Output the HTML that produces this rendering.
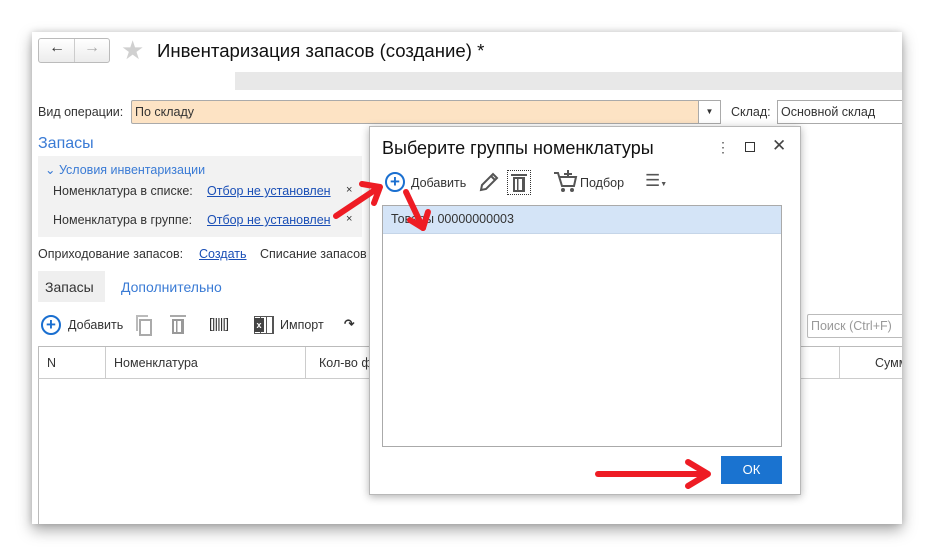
<!DOCTYPE html>
<html><head><meta charset="utf-8"><style>
*{box-sizing:border-box;margin:0;padding:0}
body{width:934px;height:557px;background:#fff;position:relative;overflow:hidden;font-family:"Liberation Sans",Arial,sans-serif;font-size:12.5px;color:#333}
.a{position:absolute;white-space:nowrap}
.win{position:absolute;left:32px;top:32px;width:870px;height:492px;background:#fff;box-shadow:0 6px 14px rgba(0,0,0,.35),0 0 6px rgba(0,0,0,.15);overflow:hidden}
.lnk{color:#1a4fb6;text-decoration:underline}
.blue{color:#3a7bd5}
.dlg{position:absolute;left:369px;top:126px;width:432px;height:369px;background:#fff;border:1px solid #b8b8b8;box-shadow:0 2px 8px rgba(0,0,0,.3)}
.tr{border:2px solid #999;background:repeating-linear-gradient(90deg,transparent 0 2px,#999 2px 3.5px,transparent 3.5px 5px)}
</style></head><body>
<div class="win">
 <div class="a" style="left:6px;top:6px;width:72px;height:25px;border:1px solid #bbb;border-radius:3px;background:linear-gradient(#fff,#ececec)"></div>
 <div class="a" style="left:42px;top:7px;width:1px;height:23px;background:#ccc"></div>
 <div class="a" style="left:17px;top:7px;font-size:16px;color:#333">&#8592;</div>
 <div class="a" style="left:52px;top:7px;font-size:16px;color:#aaa">&#8594;</div>
 <div class="a" style="left:89px;top:3px;font-size:26px;color:#d0d0d0">&#9733;</div>
 <div class="a" style="left:125px;top:8px;font-size:18.6px;color:#111">Инвентаризация запасов (создание) *</div>
 <div class="a" style="left:203px;top:40px;width:667px;height:18px;background:#e8e8e8"></div>
 <div class="a" style="left:6px;top:73px">Вид операции:</div>
 <div class="a" style="left:99px;top:68px;width:590px;height:24px;background:#fde3c4;border:1px solid #aaa;border-radius:2px;padding:4px 3px">По складу</div>
 <div class="a" style="left:666px;top:68px;width:23px;height:24px;background:#fff;border:1px solid #aaa;font-size:8px;text-align:center;line-height:22px">&#9660;</div>
 <div class="a" style="left:699px;top:73px">Склад:</div>
 <div class="a" style="left:745px;top:68px;width:140px;height:24px;border:1px solid #aaa;padding:4px 3px">Основной склад</div>
 <div class="a blue" style="left:6px;top:103px;font-size:16px">Запасы</div>
 <div class="a" style="left:6px;top:124px;width:324px;height:81px;background:#f2f2f2"></div>
 <div class="a blue" style="left:13px;top:130px">&#8964; Условия инвентаризации</div>
 <div class="a" style="left:21px;top:152px">Номенклатура в списке:</div>
 <div class="a lnk" style="left:175px;top:152px">Отбор не установлен</div>
 <div class="a" style="left:314px;top:152px;font-size:11px">×</div>
 <div class="a" style="left:21px;top:181px">Номенклатура в группе:</div>
 <div class="a lnk" style="left:175px;top:181px">Отбор не установлен</div>
 <div class="a" style="left:314px;top:181px;font-size:11px">×</div>
 <div class="a" style="left:6px;top:215px">Оприходование запасов:</div>
 <div class="a lnk" style="left:167px;top:215px">Создать</div>
 <div class="a" style="left:228px;top:215px">Списание запасов</div>
 <div class="a" style="left:6px;top:239px;width:67px;height:31px;background:#efefef"></div>
 <div class="a" style="left:13px;top:247px;font-size:14px">Запасы</div>
 <div class="a blue" style="left:89px;top:247px;font-size:14px">Дополнительно</div>
 <div class="a" style="left:9px;top:283px;width:20px;height:20px;border:2px solid #1a6fd0;border-radius:50%;color:#1a6fd0;font-weight:bold;text-align:center;line-height:15px;font-size:17px">+</div>
 <div class="a" style="left:36px;top:286px">Добавить</div>
 <div class="a" style="left:104px;top:283px;width:12px;height:16px;border:2px solid #bbb;border-right:none;border-bottom:none"></div>
 <div class="a" style="left:107px;top:287px;width:13px;height:17px;border:2px solid #aaa"></div>
 <div class="a" style="left:138px;top:283px;width:16px;height:2px;background:#aaa"></div>
 <div class="a tr" style="left:140px;top:287px;width:12px;height:15px"></div>
 <div class="a" style="left:177px;top:283px;font-size:14px;letter-spacing:-1px;color:#333">[|||||]</div>
 <div class="a" style="left:222px;top:284px;width:20px;height:18px;border:1px solid #555;background:repeating-linear-gradient(90deg,#fff 0 5px,#555 5px 6px)"></div>
 <div class="a" style="left:222px;top:286px;width:10px;height:14px;background:#444;color:#fff;font-size:9px;font-weight:bold;text-align:center;line-height:14px">x</div>
 <div class="a" style="left:248px;top:286px">Импорт</div>
 <div class="a" style="left:312px;top:284px;font-weight:bold">&#8631;</div>
 <div class="a" style="left:775px;top:282px;width:100px;height:24px;border:1px solid #bbb;border-radius:2px;padding:4px 3px;color:#999">Поиск (Ctrl+F)</div>
 <div class="a" style="left:6px;top:314px;width:870px;height:33px;border-top:1px solid #bbb;border-bottom:1px solid #ccc;border-left:1px solid #bbb"></div>
 <div class="a" style="left:73px;top:315px;width:1px;height:32px;background:#ccc"></div>
 <div class="a" style="left:273px;top:315px;width:1px;height:32px;background:#ccc"></div>
 <div class="a" style="left:807px;top:315px;width:1px;height:32px;background:#ccc"></div>
 <div class="a" style="left:15px;top:324px">N</div>
 <div class="a" style="left:82px;top:324px">Номенклатура</div>
 <div class="a" style="left:287px;top:324px">Кол-во ф</div>
 <div class="a" style="left:843px;top:324px">Сумма</div>
 <div class="a" style="left:6px;top:347px;width:1px;height:150px;background:#bbb"></div>
</div>
<div class="dlg">
 <div class="a" style="left:12px;top:11px;font-size:18px;color:#111">Выберите группы номенклатуры</div>
 <div class="a" style="left:346px;top:12px;font-size:14px;color:#555">&#8942;</div>
 <div class="a" style="left:375px;top:15px;width:10px;height:10px;border:1.5px solid #333"></div>
 <div class="a" style="left:402px;top:9px;font-size:17px;color:#444">&#10005;</div>
 <div class="a" style="left:15px;top:45px;width:20px;height:20px;border:2px solid #1a6fd0;border-radius:50%;color:#1a6fd0;font-weight:bold;text-align:center;line-height:15px;font-size:17px">+</div>
 <div class="a" style="left:41px;top:49px">Добавить</div>
 <svg class="a" style="left:108px;top:44px" width="22" height="22"><path d="M3 19 L4 14 L15 3 L19 7 L8 18 Z M13 5 L17 9" stroke="#555" stroke-width="2" fill="none"/></svg>
 <div class="a" style="left:137px;top:43px;width:24px;height:25px;border:1px dotted #333"></div>
 <div class="a" style="left:141px;top:47px;width:16px;height:2px;background:#555"></div>
 <div class="a tr" style="left:143px;top:50px;width:12px;height:15px;border-color:#555;background:repeating-linear-gradient(90deg,transparent 0 2px,#555 2px 3.5px,transparent 3.5px 5px)"></div>
 <svg class="a" style="left:183px;top:42px" width="26" height="26"><path d="M1 4 H5 L9 17 H21 L23 8 H7" stroke="#555" stroke-width="2" fill="none"/><path d="M15 1 V9 M11 5 H19" stroke="#555" stroke-width="2"/><circle cx="10" cy="21" r="2" fill="#555"/><circle cx="19" cy="21" r="2" fill="#555"/></svg>
 <div class="a" style="left:210px;top:49px">Подбор</div>
 <div class="a" style="left:275px;top:44px;font-size:17px;color:#555">&#9776;<span style="font-size:7px">&#9660;</span></div>
 <div class="a" style="left:12px;top:78px;width:400px;height:242px;border:1px solid #aaa"></div>
 <div class="a" style="left:13px;top:79px;width:398px;height:28px;background:#d4e4f7;border-bottom:1px solid #c5d5e8;padding:6px 8px;color:#333">Товары 00000000003</div>
 <div class="a" style="left:351px;top:329px;width:61px;height:28px;background:#1a73d0;color:#fff;text-align:center;line-height:28px;font-size:13px">ОК</div>
</div>
<svg class="a" style="left:0;top:0" width="934" height="557">
 <g stroke="#ee1c24" stroke-width="6" stroke-linecap="round" stroke-linejoin="round" fill="none">
  <path d="M336 216 L378 188"/><path d="M362 184 L380 187 L374 203"/>
  <path d="M406 192 L423 228"/><path d="M410 220 L423 228 L428 212"/>
  <path d="M598 474 L700 474"/><path d="M688 462 L708 474 L688 486"/>
 </g>
</svg>
</body></html>
